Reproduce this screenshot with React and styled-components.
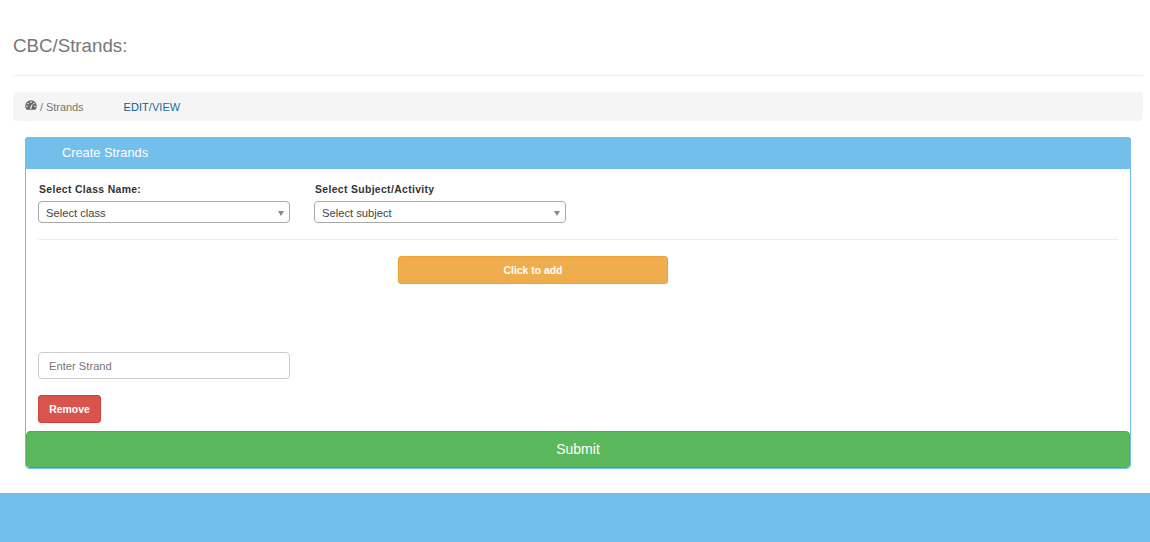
import React from "react";
import styled, { createGlobalStyle } from "styled-components";

const Global = createGlobalStyle`
  html, body { margin: 0; padding: 0; background: #fff; }
  body { font-family: "Liberation Sans", Arial, sans-serif; color: #333; }
  * { box-sizing: border-box; }
`;
const Page = styled.div`
  width: 1150px;
  height: 542px;
  display: flex;
  flex-direction: column;
  overflow: hidden;
`;
const Main = styled.main`
  flex: 1;
  padding: 0 7px 0 13px;
`;
const Title = styled.h1`
  margin: 0;
  padding-top: 35px;
  height: 76px;
  font-size: 18.72px;
  line-height: 22px;
  font-weight: 400;
  color: #777;
  border-bottom: 1px solid #eee;
`;
const Crumbs = styled.nav`
  margin-top: 16px;
  height: 29px;
  background: #f5f5f5;
  border-radius: 4px;
  padding: 0 12px;
  display: flex;
  align-items: center;
  font-size: 11px;
  color: #777;
`;
const CrumbIcon = styled.svg`
  width: 12px;
  height: 10px;
  margin-right: 3px;
  position: relative;
  top: -2px;
`;
const CrumbText = styled.span`
  letter-spacing: -0.05px;
`;
const EditLink = styled.a`
  margin-left: 40px;
  color: #1a6ea5;
  font-size: 11px;
  letter-spacing: 0.05px;
`;
const EditStrong = styled.span`
  color: #0d5a8c;
`;
const Panel = styled.section`
  margin: 16px 12px 0;
  height: 332px;
  border: 1px solid #73bfeb;
  border-radius: 4px;
  display: flex;
  flex-direction: column;
`;
const PanelHead = styled.header`
  background: #73bfeb;
  color: #fff;
  font-size: 12.8px;
  line-height: 32px;
  padding-left: 37px;
  margin: -1px -1px 0;
  border-radius: 3px 3px 0 0;
  height: 32px;
`;
const PanelBody = styled.div`
  flex: 1;
  padding: 15px 12px 0;
  display: flex;
  flex-direction: column;
  align-items: flex-start;
`;
const SelectRow = styled.div`
  display: flex;
  gap: 24px;
`;
const Field = styled.div`
  width: 252px;
  display: flex;
  flex-direction: column;
`;
const Label = styled.label`
  font-size: 10.4px;
  line-height: 12px;
  font-weight: 700;
  letter-spacing: 0.35px;
  padding-left: 1px;
  margin-bottom: 5px;
  color: #333;
`;
const Select = styled.div`
  position: relative;
  height: 22px;
  border: 1px solid #aaa;
  border-radius: 4px;
  font-size: 11.2px;
  line-height: 22px;
  padding-left: 7px;
  color: #444;
  &::after {
    content: "";
    position: absolute;
    right: 5px;
    top: 9px;
    border-style: solid;
    border-width: 5px 3px 0;
    border-color: #888 transparent transparent;
  }
`;
const Rule = styled.hr`
  width: 100%;
  margin: 16px 0;
  border: 0;
  border-top: 1px solid #eee;
`;
const AddButton = styled.button`
  align-self: flex-start;
  margin-left: 360px;
  width: 270px;
  height: 28px;
  background: #f0ad4e;
  border: 1px solid #eea236;
  border-radius: 3px;
  color: #fff;
  font: 700 10.4px "Liberation Sans", Arial, sans-serif;
  padding: 0;
`;
const StrandInput = styled.input`
  margin-top: 68px;
  width: 252px;
  height: 27px;
  border: 1px solid #ccc;
  border-radius: 4px;
  padding: 0 10px;
  font: 11.2px "Liberation Sans", Arial, sans-serif;
  &::placeholder { color: #777; opacity: 1; }
`;
const RemoveButton = styled.button`
  margin-top: 16px;
  width: 63px;
  height: 28px;
  background: #d9534f;
  border: 1px solid #d43f3a;
  border-radius: 3px;
  color: #fff;
  font: 700 10.4px "Liberation Sans", Arial, sans-serif;
  padding: 0;
`;
const SubmitButton = styled.button`
  height: 37px;
  background: #5cb85c;
  border: 1px solid #4cae4c;
  border-radius: 4px;
  color: #fff;
  font: 14px "Liberation Sans", Arial, sans-serif;
  padding: 0 0 2px;
  width: 100%;
`;
const Footer = styled.footer`
  height: 49px;
  background: #73bfeb;
`;

const Gauge = () => (
  <CrumbIcon viewBox="0 0 13 11" aria-hidden="true">
    <path
      fill="#666"
      d="M6.5 0.3A6.3 6.3 0 0 0 0.2 6.6c0 1.5.5 2.9 1.5 4l.2.2h9.2l.2-.2a6.3 6.3 0 0 0 1.5-4A6.3 6.3 0 0 0 6.5.3z"
    />
    <g fill="#f5f5f5">
      <circle cx="2.2" cy="7" r="0.9" />
      <circle cx="3.4" cy="3.8" r="0.9" />
      <circle cx="6.5" cy="2.4" r="0.9" />
      <circle cx="9.6" cy="3.8" r="0.9" />
      <circle cx="10.8" cy="7" r="0.9" />
      <path d="M5 9.5l2.6-5 .7.3-1.6 5z" />
    </g>
  </CrumbIcon>
);

export default function App() {
  return (
    <Page>
      <Global />
      <Main>
        <Title>CBC/Strands:</Title>
        <Crumbs>
          <Gauge />
          <CrumbText>/ Strands</CrumbText>
          <EditLink><EditStrong>EDIT</EditStrong>/VIEW</EditLink>
        </Crumbs>
        <Panel>
          <PanelHead>Create Strands</PanelHead>
          <PanelBody>
            <SelectRow>
              <Field>
                <Label>Select Class Name:</Label>
                <Select>Select class</Select>
              </Field>
              <Field>
                <Label>Select Subject/Activity</Label>
                <Select>Select subject</Select>
              </Field>
            </SelectRow>
            <Rule />
            <AddButton>Click to add</AddButton>
            <StrandInput placeholder="Enter Strand" />
            <RemoveButton>Remove</RemoveButton>
          </PanelBody>
          <SubmitButton>Submit</SubmitButton>
        </Panel>
      </Main>
      <Footer />
    </Page>
  );
}
